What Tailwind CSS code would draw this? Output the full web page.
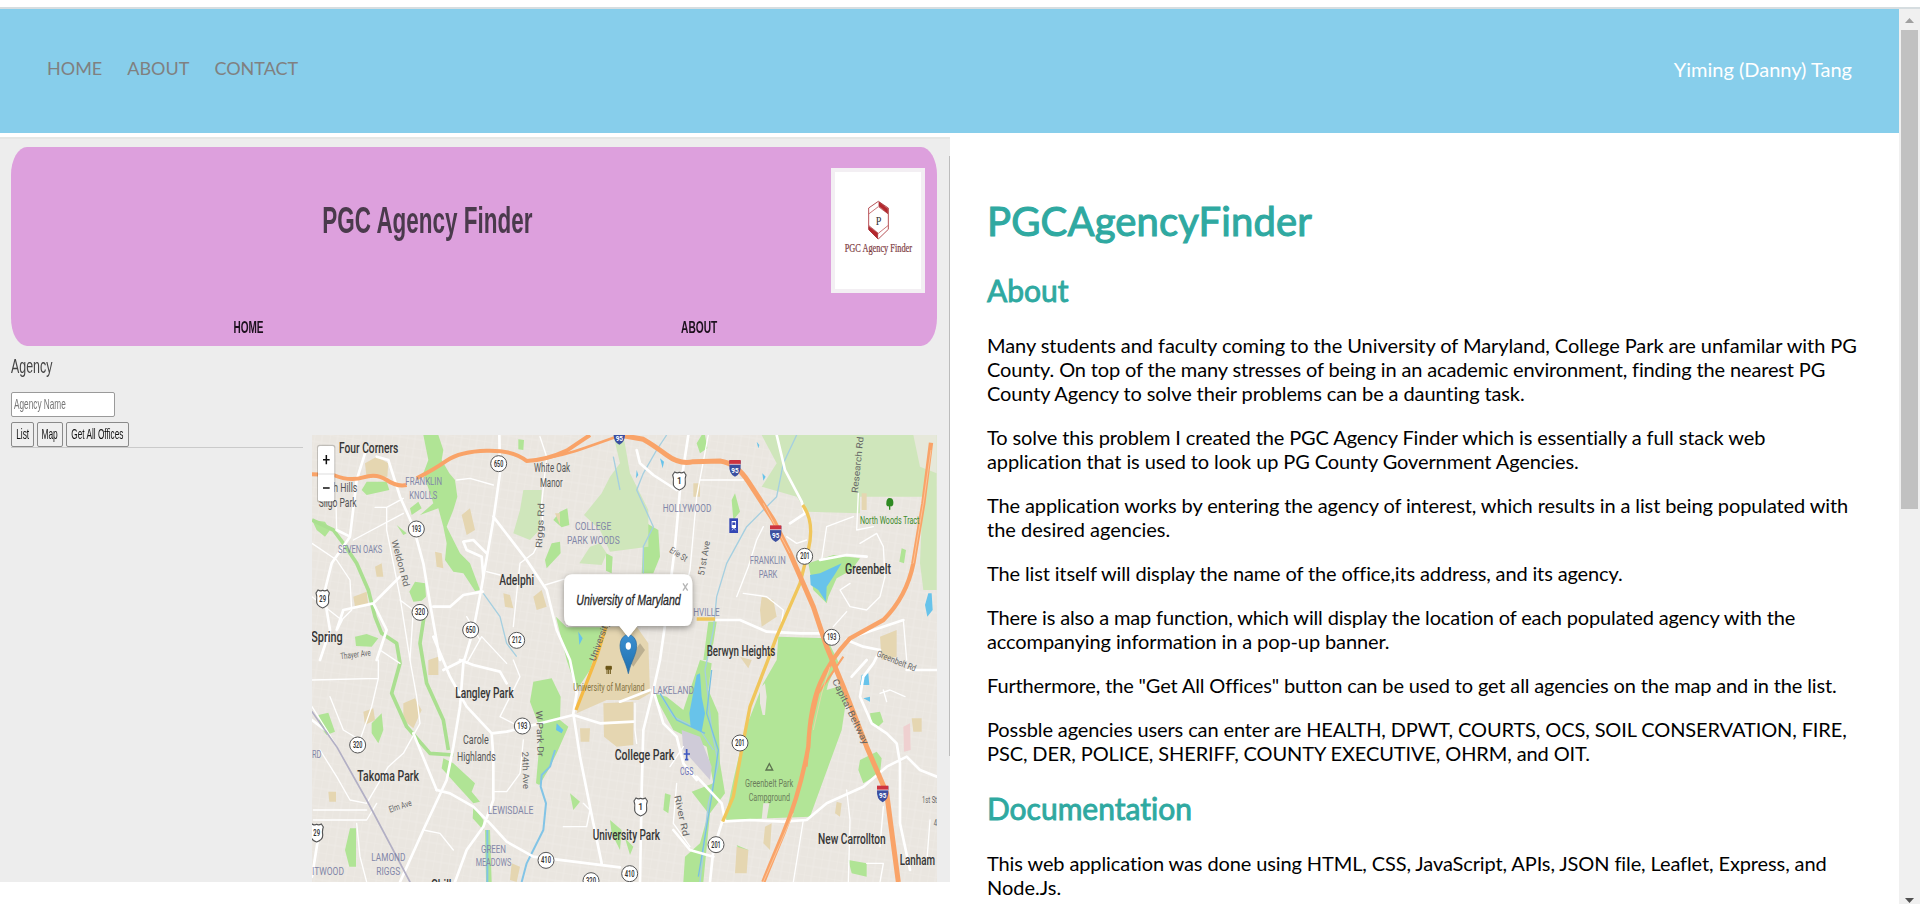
<!DOCTYPE html>
<html lang="en">
<head>
<meta charset="utf-8">
<title>PGCAgencyFinder</title>
<script src="https://cdn.jsdelivr.net/npm/@tailwindcss/browser@4"></script>
</head>
<body class="h-[904px] overflow-hidden bg-white font-['Lato',sans-serif] text-black flex flex-col">
<div class="h-[7px] shrink-0 bg-white"></div>
<div class="h-[2px] shrink-0 bg-[#d6dde0]"></div>
<div class="flex h-[895px]">
<div class="w-[1899px] flex flex-col overflow-hidden">
  <header class="h-[124px] shrink-0 bg-[#87ceeb] flex items-start justify-between pl-[47px] pr-[47px]">
    <nav class="flex gap-[25px] pt-[47px] text-[18px] leading-[24px] text-[#808080]">
      <a>HOME</a><a>ABOUT</a><a>CONTACT</a>
    </nav>
    <div class="pt-[48px] text-[20px] leading-[24px] text-white">Yiming (Danny) Tang</div>
  </header>

  <main class="flex flex-1 min-h-0">
    <section class="mt-[4px] w-[950px] h-[745px] shrink-0 bg-[#ededed] font-['Liberation_Sans',sans-serif] flex flex-col">
      <div class="h-[2px] bg-[#e5e7e5]"></div>
      <div class="flex h-[743px]">
      <div class="w-[949px] pl-[11px] pt-[8px]">
        <div class="w-[926px] h-[199px] rounded-[16px/28px] bg-[#dda0dd] flex flex-col px-3">
          <div class="flex pt-[21px]">
            <div class="flex-1 flex justify-center pt-[33px]"><span class="text-[36px] leading-[40px] font-bold text-[#4a3a4c] whitespace-nowrap scale-x-[0.624]">PGC Agency Finder</span></div>
            <div class="w-[94px] h-[125px] bg-white border-[4px] border-[#f3eff3] flex flex-col items-center">
              <svg width="86" height="117" viewBox="0 0 258 351">
                <g fill="none" stroke="#a82f35" stroke-width="2.5">
                  <path d="M130 88 160 108V172L130 201 101 172V108Z"/>
                  <path d="M101 126 130 104 160 126M101 160 130 184 160 160" stroke="#c05a5e"/>
                  <path d="M132 90 158 110V124L132 102ZM102 164 128 184V200L102 174Z" fill="#b5262c"/>
                </g>
                <text x="122" y="158" font-family="Liberation Serif" font-size="40" textLength="17" lengthAdjust="spacingAndGlyphs" fill="#333">P</text>
                <text x="29" y="241" font-family="Liberation Serif" font-size="40" textLength="202" lengthAdjust="spacingAndGlyphs" fill="#7d3a40" stroke="#7d3a40" stroke-width=".7">PGC Agency Finder</text>
              </svg>
            </div>
          </div>
          <div class="grid grid-cols-2 pt-[25px] text-[17px] leading-[20px] font-bold text-[#1c101d]">
            <div class="flex justify-center"><span class="scale-x-[0.59]">HOME</span></div>
            <div class="flex justify-center"><span class="scale-x-[0.6]">ABOUT</span></div>
          </div>
        </div>
        <div class="flex w-[926px] h-[536px]">
          <div class="w-[300px] shrink-0">
            <div class="pt-[9px] text-[20px] leading-[22px] text-[#444]"><span class="inline-block origin-left scale-x-[0.62]">Agency</span></div>
            <div class="mt-[15px] w-[104px] h-[25px] rounded-[2px] border border-[#9a9a9a] bg-white flex items-center pl-[2px] text-[15px] text-[#757575]"><span class="origin-left scale-x-[0.55] whitespace-nowrap">Agency Name</span></div>
            <div class="mt-[5px] flex gap-[3px] text-[15px] text-[#111]">
              <div class="w-[23px] h-[25px] rounded-[2px] border border-[#8a8a8a] bg-[#efefef] flex items-center justify-center"><span class="scale-x-[0.56] shrink-0">List</span></div>
              <div class="w-[26px] h-[25px] rounded-[2px] border border-[#8a8a8a] bg-[#efefef] flex items-center justify-center"><span class="scale-x-[0.56] shrink-0">Map</span></div>
              <div class="w-[63px] h-[25px] rounded-[2px] border border-[#8a8a8a] bg-[#efefef] flex items-center justify-center"><span class="scale-x-[0.55] shrink-0 whitespace-nowrap">Get All Offices</span></div>
            </div>
            <div class="h-px w-[292px] bg-[#cacaca]"></div>
          </div>
          <div class="pt-[89px] pl-px">
<svg class="block" width="625" height="447" viewBox="36 15 1875 1341" font-family="Roboto, sans-serif">
<defs>
  <linearGradient id="pin" x2="0" y2="1"><stop stop-color="#3b8fd0"/><stop offset="1" stop-color="#1f6fae"/></linearGradient>
  <filter id="sh" x="-20%" y="-20%" width="140%" height="150%"><feDropShadow dx="0" dy="6" stdDeviation="10" flood-opacity=".4"/></filter>
  <pattern id="streets" width="46" height="54" patternUnits="userSpaceOnUse" patternTransform="rotate(9)"><path d="M0 0H46M0 27H46M0 0V54M23 0V54" stroke="#f6f4f0" stroke-width="2.4" fill="none"/></pattern>
  <g id="shield"><path d="M-17-22H17V-10Q19 18 0 26Q-19 18-17-10Z" fill="#3b4fa0"/><path d="M-17-24H17V-11H-17Z" fill="#cc3340"/><path d="M-17-11H17" stroke="#fff" stroke-width="2"/><text y="14" font-size="24" font-weight="700" text-anchor="middle" textLength="22" lengthAdjust="spacingAndGlyphs" fill="#fff">95</text></g>
  <path id="us" d="M-14-27Q-6-22 0-26Q6-22 14-27L20-18Q16-8 18 4Q20 20 0 27Q-20 20-18 4Q-16-8-20-18Z" fill="#fff" stroke="#555" stroke-width="3.5"/>
</defs>
<rect x="36" y="15" width="1875" height="1341" fill="#eae6e0"/>
<rect x="36" y="15" width="1875" height="1341" fill="url(#streets)" opacity=".4"/>

<!-- parks and fields -->
<g fill="#b0e495">
  <path d="M370 15H415L430 60 425 90 448 130 465 150 472 200 460 240 440 290 480 370 510 400 540 480 525 483 490 430 460 425 435 390 440 340 430 290 415 235 360 255 400 220 370 130 385 90Z"/>
  <path d="M655 28 672 30 670 60 655 58ZM780 245 802 235 808 285 785 292 760 270ZM755 340 780 335 782 370 740 415 735 390ZM918 370 938 380 935 430 918 422ZM185 180 200 155 260 155 268 180 200 195ZM345 455 375 460 378 500 365 512 340 515 328 485ZM165 620 200 612 235 625 215 650 168 648ZM330 235 355 215 365 235 335 255ZM290 285 320 310 310 315ZM36 270 75 275 90 300 75 320 50 300Z"/>
  <path d="M768 560 800 592 915 592 870 720 830 780 800 690ZM55 855 85 848 105 905 80 915 60 890ZM215 880 245 850 250 900 235 940 215 910ZM700 755 755 745 782 800 780 870 805 890 770 970 745 1020 718 1065 708 1060 722 900 690 815ZM430 985 460 1000 525 1060 515 1085 540 1115 520 1120 470 1065 425 1015ZM520 1130 550 1170 550 1200 518 1165ZM150 1195H168V1310H148L135 1260ZM555 1200H570L575 1356H558ZM810 1090 840 1115 820 1140ZM930 1170 965 1200 960 1260 935 1210Z"/>
  <path d="M1205 15H1215L1222 55 1200 70 1190 40ZM1305 190 1320 245 1300 270 1295 210ZM1040 280 1075 300 1080 380 1060 430 1025 430 1030 340ZM1225 575H1250L1240 640 1220 690 1210 690ZM1525 400 1600 375 1680 385 1655 420 1610 445 1585 500 1580 520 1540 480ZM1805 355 1818 360 1812 400 1798 395ZM1395 530 1410 545 1400 570 1385 560Z"/>
  <path d="M1200 690 1235 700 1225 780 1255 850 1260 1000 1275 1090 1230 1150 1210 1356H1150L1155 1280 1200 1240 1225 1150 1175 1085 1240 1060 1220 950 1120 900 1060 790 1100 800 1150 840ZM1680 990 1730 965 1745 985 1740 1030 1690 1060 1675 1020ZM1710 850 1740 845 1750 875 1730 895 1715 880ZM1095 1090 1112 1095 1105 1150 1090 1140ZM1645 1290 1700 1300 1700 1340 1655 1330ZM1310 1245 1345 1260 1330 1290ZM975 1225 1000 1250 990 1275Z"/>
</g>
<path d="M1435 620 1580 625 1615 695 1585 760 1580 780 1620 768 1640 800 1625 900 1530 1160 1275 1170 1300 1050 1335 900 1390 760 1430 690Z" fill="#b2e597"/>
<g fill="#cfe6bb">
  <path d="M960 100 930 140 905 190 852 255 900 300 930 365 1045 350V240L990 130 970 15H940ZM670 180 725 180 718 300 690 330 640 310 660 240ZM870 350 900 340 920 370 905 405 838 400Z"/>
  <path d="M1385 15H1910V480H1870L1860 400 1868 200H1680V250L1520 245 1490 200 1385 170 1430 100Z"/>
  <path d="M1840 15H1910V130L1860 110Z" fill="#e6e8da"/>
</g>
<g fill="#e5d6b1">
  <path d="M195 100 230 80 265 100 262 140 200 145ZM485 255 510 235 525 300 500 315ZM225 410 245 400 250 440 230 440ZM405 365 425 370 430 415 410 410ZM160 500 200 485 205 525 165 530ZM700 500 725 480 740 530 710 540ZM610 490 630 495 640 535 615 530ZM765 250 780 250 780 285ZM310 820 345 805 365 840 340 895 310 870ZM190 845 220 835 225 870 195 885ZM85 1085H108V1115H88ZM385 690 415 680 415 735 385 735ZM840 895H870L868 935H842Z"/>
  <path d="M910 590H1010L1045 640 1050 790 1015 810H920L830 850 870 720ZM910 820 1000 815 1000 945 950 950 912 920ZM1180 160H1200V200H1180ZM1385 500 1420 510 1430 560 1385 590 1380 540ZM1685 190H1700V240H1685ZM1740 620 1790 600 1790 680 1745 690ZM1320 680 1355 690 1345 715ZM1395 1190 1415 1180 1410 1260 1390 1240ZM1610 1115 1625 1120 1620 1160 1605 1150ZM1835 865H1865V905H1840ZM635 1300 660 1310 650 1356 630 1350ZM1310 1250 1345 1260 1340 1330 1305 1330Z"/>
</g>
<path d="M1380 775 1395 760 1400 800 1395 855 1388 855 1380 820Z" fill="#eae6e0"/>
<path d="M1390 1120H1408L1400 1168H1385Z" fill="#eae6e0"/>
<path d="M1145 900 1200 920 1235 1010 1230 1050 1150 960Z" fill="#cfcbd8"/>
<path d="M1810 890 1830 880 1832 960 1812 965Z" fill="#efd0d0"/>
<g fill="none" stroke="#aadf90" stroke-width="11" stroke-linejoin="round">
  <path d="M36 270 100 300 130 340 170 400 205 480 225 560 245 610 290 640 300 700 275 790 320 890 390 970 460 975M372 560 360 640 380 760 430 870 445 960"/>
</g>
<g fill="none" stroke="#82c4e6" stroke-width="4" stroke-linejoin="round">
  <path d="M1100 15 1070 60 1030 130 1010 180 1060 290 1030 350 1030 430M1490 15 1450 100 1430 200 1340 290 1280 400 1250 500 1240 600 1215 720 1235 900 1255 1000 1225 1120 1200 1356M1080 790 1120 860 1200 900 1240 960M550 490 600 560 620 640 650 680M940 80 960 180" stroke="#a5cfe0"/>
  <path d="M1235 720 1220 850 1255 960 1235 1100 1195 1340M1080 790 1130 870 1215 910" stroke="#79bfe2"/>
  <path d="M765 960 750 1010 725 1035 722 1070 738 1120 730 1200 700 1260 680 1300 665 1356M562 1200V1356" stroke-width="6"/>
</g>
<g fill="#68c3ea">
  <path d="M1190 735 1200 730 1205 800 1215 850 1205 905 1172 890 1168 850ZM1530 435 1560 430 1625 400 1600 440 1580 470 1578 515 1555 480 1532 465ZM1885 490 1895 490 1898 540 1882 560 1875 525ZM1685 735 1705 730 1708 765 1680 765ZM770 880 790 900 785 910 768 900ZM835 605 848 625 838 645ZM1690 805 1710 800 1710 815ZM1080 85 1092 95 1088 115ZM1010 120 1015 135 1008 145ZM1370 35 1378 45 1375 55ZM1387 130 1397 140 1390 152Z"/>
</g>

<!-- minor and main roads -->
<g fill="none" stroke="#fff" stroke-linejoin="round" stroke-linecap="round">
  <g stroke-width="4">
    <path d="M110 300 108 220M225 232H260L310 205M260 232V300L300 500 330 690M160 330 310 250M36 340 110 390 150 450 155 540 125 570M125 570 36 500M470 150 510 145 580 165M560 425 600 435M640 590 650 490 660 400 700 370 730 310 725 220 740 80 720 20M735 465 800 445M500 700 545 620 620 700M540 630 500 560M300 510 340 540 330 690"/>
    <path d="M36 750 235 745M90 800 130 900 180 930M235 690V745L215 830 180 930M40 1140H200M40 1170H200L230 1120M330 690 350 800 360 880 310 970 265 1010 200 1120 150 1110 110 1040 60 960M370 1200 420 1210 460 1260M300 700 240 660M580 1085H620L660 1030 670 930M850 1120 870 1140 860 1190H790M640 690 660 740 600 860 640 880M1005 820V900L1010 940M170 1180 180 1280 200 1356M36 830 80 900 110 950"/>
    <path d="M1225 15 1190 200 1170 420 1150 500 1110 580M1200 150H1330M1310 500 1345 410 1370 330 1390 290M1330 490 1400 500 1450 540 1440 610M1460 320 1490 340 1520 330M1565 390 1580 290 1660 260M1675 190 1670 300 1720 290M1680 340 1730 310 1750 350 1755 440 1740 500 1700 540M1700 540 1650 530 1620 480 1650 460M1640 545 1600 590M1810 570 1820 690M1815 800 1770 780 1740 790M1760 815 1750 780M1150 950 1110 1010M1130 1060 1120 1180 1170 1250M1640 1080 1650 1170 1645 1356M1750 1130 1740 1250M1510 1170 1480 1356M1890 1170 1880 1300M1700 1300 1750 1300 1740 1356"/>
  </g>
  <g stroke-width="8">
    <path d="M195 70 170 150 150 320 95 400 75 480M230 80 265 90 300 200 340 290 370 400 390 520 420 690M150 320 110 300M598 15 600 130 580 270 545 470 520 600 490 700 480 830 460 950 440 1050 370 1200 300 1356M580 260 680 390 740 480 770 600 810 690 830 790 820 850 840 980 880 1180 905 1300M548 485 490 495 450 530H400M550 440 545 380 500 360 490 335 520 330 560 370M400 620 450 740 500 830 575 910 580 980 580 1110 550 1190 500 1260 465 1356M575 910 620 905 820 855 900 880 1000 875M410 1080 450 1090 520 1130 570 1180 620 1235 700 1280 960 1312"/>
    <path d="M75 510 90 600 60 690M125 570 110 600 130 540 220 520 260 480 300 440M220 520 260 600 230 690M36 870 75 900M480 690 520 705 600 725 620 760M340 910 410 1080M36 1190H60L36 1340M490 690 430 720"/>
    <path d="M1165 15 1140 180 1125 350 1100 550 1080 690 1060 780 1030 900 1025 1080 1020 1356M1010 60 1020 100 1060 135 1130 180M1430 15 1455 120 1505 215 1515 250 1470 280M1250 570 1320 570 1400 605 1500 610 1580 610M1640 630 1690 650 1740 660M1660 620 1810 570M1560 390 1640 375 1700 380M1740 660 1720 700 1690 740 1680 800 1715 880 1760 910 1790 940 1800 1000 1800 1180 1830 1320M1820 720H1911M1265 1175 1350 1170 1450 1175 1520 1170 1580 1120 1690 1070 1760 1010 1820 980 1860 1020 1911 1040M1190 1040 1265 1120 1275 1170M1060 780 1090 880 1130 920 1150 1000 1190 1050M1265 1180 1240 1260 1230 1356M1120 1200 1170 1260 1240 1280M960 815 1050 780M1655 740 1700 690"/>
  </g>
  <path d="M36 845 110 950 200 1110 330 1356" stroke="#b2afc4" stroke-width="5"/>
</g>
<g fill="none" stroke="#f0c65b" stroke-width="10" stroke-linejoin="round">
  <path d="M1508 225Q1545 275 1525 360L1500 460 1430 620 1400 700 1350 830 1325 960 1300 1100 1268 1175M1190 567H1245"/>
  <path d="M918 590 890 680 828 840" stroke="#f5ba45"/>
</g>
<g fill="none" stroke="#f9a368" stroke-width="14" stroke-linejoin="round" stroke-linecap="butt">
  <path d="M36 133 100 135Q150 155 190 142T260 150T320 165M350 145Q400 120 440 92T560 62T680 93Q740 90 800 62L870 15" stroke-width="12"/>
  <path d="M700 92Q800 75 860 52L945 22" stroke-width="8"/>
  <path d="M975 18 1030 28Q1060 45 1100 75T1180 95L1260 93Q1310 100 1345 155L1420 270 1470 370 1540 530 1580 650 1630 770 1700 950 1760 1090 1795 1356" stroke-width="15"/>
  <path d="M1893 38 1870 220 1840 400Q1820 500 1750 570L1650 625Q1590 690 1560 760T1525 950Q1500 1090 1450 1210T1390 1356" stroke-width="13"/>
  <path d="M1630 680 1555 790 1530 900 1520 1010" stroke-width="6"/>
</g>
<path d="M1893 60 1870 220 1840 400M1590 710 1565 790 1540 900M1480 1150 1390 1356M1390 220 1470 370" stroke="#fcd4b0" stroke-width="2" fill="none"/>

<!-- route shields -->
<g fill="#fff" stroke="#555" stroke-width="3">
  <circle cx="596" cy="101" r="24"/><circle cx="349" cy="297" r="24"/><circle cx="360" cy="547" r="24"/><circle cx="512" cy="600" r="24"/><circle cx="650" cy="631" r="24"/><circle cx="1514" cy="379" r="24"/><circle cx="1595" cy="622" r="24"/><circle cx="173" cy="945" r="24"/><circle cx="667" cy="888" r="24"/><circle cx="738" cy="1291" r="24"/><circle cx="873" cy="1352" r="24"/><circle cx="989" cy="1331" r="24"/><circle cx="1320" cy="939" r="24"/><circle cx="1248" cy="1244" r="24"/>
</g>
<g font-size="25" font-weight="600" fill="#333" text-anchor="middle">
  <text x="596" y="110" textLength="28" lengthAdjust="spacingAndGlyphs">650</text><text x="349" y="306" textLength="28" lengthAdjust="spacingAndGlyphs">193</text><text x="360" y="556" textLength="30" lengthAdjust="spacingAndGlyphs">320</text><text x="512" y="609" textLength="30" lengthAdjust="spacingAndGlyphs">650</text><text x="650" y="640" textLength="28" lengthAdjust="spacingAndGlyphs">212</text><text x="1515" y="388" textLength="28" lengthAdjust="spacingAndGlyphs">201</text><text x="1595" y="631" textLength="28" lengthAdjust="spacingAndGlyphs">193</text><text x="173" y="954" textLength="28" lengthAdjust="spacingAndGlyphs">320</text><text x="667" y="897" textLength="30" lengthAdjust="spacingAndGlyphs">193</text><text x="738" y="1300" textLength="30" lengthAdjust="spacingAndGlyphs">410</text><text x="873" y="1361" textLength="30" lengthAdjust="spacingAndGlyphs">320</text><text x="989" y="1340" textLength="30" lengthAdjust="spacingAndGlyphs">410</text><text x="1320" y="948" textLength="28" lengthAdjust="spacingAndGlyphs">201</text><text x="1248" y="1253" textLength="28" lengthAdjust="spacingAndGlyphs">201</text>
</g>
<use href="#us" x="68" y="507"/><use href="#us" x="1138" y="153"/><use href="#us" x="50" y="1209"/><use href="#us" x="1022" y="1131"/>
<g font-size="25" font-weight="600" fill="#333" text-anchor="middle"><text x="68" y="517" textLength="20" lengthAdjust="spacingAndGlyphs">29</text><text x="1138" y="162">1</text><text x="50" y="1218" textLength="20" lengthAdjust="spacingAndGlyphs">29</text><text x="1022" y="1140">1</text></g>
<use href="#shield" x="958" y="18"/><use href="#shield" x="1305" y="114"/><use href="#shield" x="1427" y="310"/><use href="#shield" x="1748" y="1091"/>

<!-- street names -->
<g font-size="27" fill="#666">
  <text transform="translate(726 355) rotate(-87)" textLength="135" lengthAdjust="spacingAndGlyphs">Riggs Rd</text>
  <text transform="translate(274 332) rotate(75)" textLength="145" lengthAdjust="spacingAndGlyphs">Weldon Rd</text>
  <text transform="translate(122 688) rotate(-7)" textLength="92" lengthAdjust="spacingAndGlyphs">Thayer Ave</text>
  <text transform="translate(885 695) rotate(-70)" textLength="125" lengthAdjust="spacingAndGlyphs">University</text>
  <text transform="translate(1106 365) rotate(32)" textLength="58" lengthAdjust="spacingAndGlyphs">Erie St</text>
  <text transform="translate(1212 438) rotate(-80)" textLength="105" lengthAdjust="spacingAndGlyphs">51st Ave</text>
  <text transform="translate(1673 190) rotate(-84)" textLength="170" lengthAdjust="spacingAndGlyphs">Research Rd</text>
  <text transform="translate(1728 678) rotate(22)" textLength="125" lengthAdjust="spacingAndGlyphs">Greenbelt Rd</text>
  <text transform="translate(1596 752) rotate(64)" textLength="215" lengthAdjust="spacingAndGlyphs">Capital Beltway</text>
  <text transform="translate(708 842) rotate(88)" textLength="138" lengthAdjust="spacingAndGlyphs">W Park Dr</text>
  <text transform="translate(666 965) rotate(88)" textLength="112" lengthAdjust="spacingAndGlyphs">24th Ave</text>
  <text transform="translate(270 1148) rotate(-18)" textLength="70" lengthAdjust="spacingAndGlyphs">Elm Ave</text>
  <text transform="translate(1123 1098) rotate(78)" textLength="125" lengthAdjust="spacingAndGlyphs">River Rd</text>
  <text x="1866" y="1120" textLength="45" lengthAdjust="spacingAndGlyphs">1st St</text>
  <text x="1901" y="1189" textLength="10" lengthAdjust="spacingAndGlyphs">4</text>
</g>

<!-- neighbourhoods -->
<g font-size="35" fill="#8286a8">
  <text x="316" y="165" textLength="110" lengthAdjust="spacingAndGlyphs">FRANKLIN</text><text x="328" y="208" textLength="84" lengthAdjust="spacingAndGlyphs">KNOLLS</text>
  <text x="114" y="369" textLength="133" lengthAdjust="spacingAndGlyphs">SEVEN OAKS</text>
  <text x="825" y="300" textLength="109" lengthAdjust="spacingAndGlyphs">COLLEGE</text><text x="801" y="341" textLength="158" lengthAdjust="spacingAndGlyphs">PARK WOODS</text>
  <text x="1088" y="246" textLength="146" lengthAdjust="spacingAndGlyphs">HOLLYWOOD</text>
  <text x="1349" y="403" textLength="108" lengthAdjust="spacingAndGlyphs">FRANKLIN</text><text x="1376" y="445" textLength="56" lengthAdjust="spacingAndGlyphs">PARK</text>
  <text x="1180" y="558" textLength="79" lengthAdjust="spacingAndGlyphs">HVILLE</text>
  <text x="1058" y="791" textLength="124" lengthAdjust="spacingAndGlyphs">LAKELAND</text>
  <text x="1140" y="1036" textLength="40" lengthAdjust="spacingAndGlyphs" fill="#6a72b8">CGS</text>
  <text x="36" y="983" textLength="28" lengthAdjust="spacingAndGlyphs">RD</text>
  <text x="563" y="1153" textLength="137" lengthAdjust="spacingAndGlyphs">LEWISDALE</text>
  <text x="543" y="1268" textLength="75" lengthAdjust="spacingAndGlyphs">GREEN</text><text x="527" y="1309" textLength="107" lengthAdjust="spacingAndGlyphs">MEADOWS</text>
  <text x="214" y="1294" textLength="102" lengthAdjust="spacingAndGlyphs">LAMOND</text><text x="229" y="1336" textLength="72" lengthAdjust="spacingAndGlyphs">RIGGS</text>
  <text x="36" y="1334" textLength="96" lengthAdjust="spacingAndGlyphs">ITWOOD</text>
</g>
<g font-size="38" fill="#555">
  <text x="100" y="185" textLength="72" lengthAdjust="spacingAndGlyphs">h Hills</text><text x="56" y="232" textLength="114" lengthAdjust="spacingAndGlyphs">Sligo Park</text>
  <text x="702" y="126" textLength="108" lengthAdjust="spacingAndGlyphs">White Oak</text><text x="720" y="172" textLength="68" lengthAdjust="spacingAndGlyphs">Manor</text>
  <text x="489" y="943" textLength="77" lengthAdjust="spacingAndGlyphs">Carole</text><text x="471" y="992" textLength="116" lengthAdjust="spacingAndGlyphs">Highlands</text>
</g>
<g font-size="34" fill="#6b7d5b">
  <text x="1335" y="1070" textLength="145" lengthAdjust="spacingAndGlyphs">Greenbelt Park</text><text x="1346" y="1114" textLength="124" lengthAdjust="spacingAndGlyphs">Campground</text>
  <text x="1680" y="281" textLength="178" lengthAdjust="spacingAndGlyphs" fill="#3c8a2b">North Woods Tract</text>
  <text x="820" y="782" textLength="214" lengthAdjust="spacingAndGlyphs" fill="#857444">University of Maryland</text>
</g>
<g font-size="45" font-weight="500" fill="#363636">
  <text x="117" y="68" textLength="178" lengthAdjust="spacingAndGlyphs">Four Corners</text>
  <text x="598" y="466" textLength="104" lengthAdjust="spacingAndGlyphs">Adelphi</text>
  <text x="34" y="636" textLength="94" lengthAdjust="spacingAndGlyphs">Spring</text>
  <text x="1635" y="431" textLength="138" lengthAdjust="spacingAndGlyphs">Greenbelt</text>
  <text x="1220" y="678" textLength="206" lengthAdjust="spacingAndGlyphs">Berwyn Heights</text>
  <text x="466" y="805" textLength="175" lengthAdjust="spacingAndGlyphs">Langley Park</text>
  <text x="172" y="1053" textLength="185" lengthAdjust="spacingAndGlyphs">Takoma Park</text>
  <text x="944" y="990" textLength="179" lengthAdjust="spacingAndGlyphs">College Park</text>
  <text x="878" y="1229" textLength="202" lengthAdjust="spacingAndGlyphs">University Park</text>
  <text x="1554" y="1242" textLength="203" lengthAdjust="spacingAndGlyphs">New Carrollton</text>
  <text x="1799" y="1306" textLength="106" lengthAdjust="spacingAndGlyphs">Lanham</text>
  <text x="393" y="1380" textLength="106" lengthAdjust="spacingAndGlyphs">Chillum</text>
</g>

<!-- point symbols -->
<path d="M1769 204C1782 204 1781 220 1779 226 1774 231 1772 229 1771 229V239H1767V229C1760 231 1758 224 1759 219 1759 210 1762 204 1769 204Z" fill="#2f8a22"/>
<g transform="translate(1288 265)"><rect width="26" height="44" fill="#3346b5"/><rect x="7" y="8" width="13" height="21" fill="#fff"/><rect x="9" y="12" width="9" height="8" fill="#3346b5"/><path d="M8 36 13 29M19 36 14 29" stroke="#fff" stroke-width="2"/></g>
<path d="M1160 957V990M1151 972H1170M1155 989H1165" stroke="#3f58c0" stroke-width="5"/>
<path d="M1398 1020 1408 1001 1418 1020Z" fill="none" stroke="#5e7350" stroke-width="4"/>
<path d="M918 709H934V718H918ZM921 720V732M926 720V732M931 720V732" fill="#6a5516" stroke="#6a5516" stroke-width="3"/>

<!-- marker and popup -->
<path d="M985 690 1020 640 1035 660 1000 710Z" fill="#000" opacity=".18"/>
<g filter="url(#sh)"><path d="M816 433H1153Q1177 433 1177 463V558Q1177 588 1153 588H1010L985 622 960 588H816Q792 588 792 558V463Q792 433 816 433Z" fill="#fff"/></g>
<path d="M985 731C976 690 960 675 960 646A25 32 0 0 1 1010 646C1010 675 994 690 985 731Z" fill="url(#pin)" stroke="#2468a0" stroke-width="2"/><ellipse cx="985" cy="648" rx="8" ry="11" fill="#fff"/>
<path d="M955 585H1015L985 622Z" fill="#fff"/>
<text x="829" y="524" font-family="Liberation Sans" font-style="italic" font-size="43" textLength="313" lengthAdjust="spacingAndGlyphs" fill="#2b2b2b" stroke="#2b2b2b" stroke-width="1">University of Maryland</text>
<path d="M1149 460 1163 482M1163 460 1149 482" stroke="#b5b5b5" stroke-width="4"/>

<!-- zoom buttons -->
<rect x="51" y="44" width="55" height="174" rx="8" fill="#000" opacity=".18"/>
<rect x="54" y="48" width="49" height="166" rx="6" fill="#fff"/><path d="M54 132H103" stroke="#ccc" stroke-width="2"/>
<path d="M69 89H89M79 75V103M69 174H89" stroke="#111" stroke-width="4.5"/>
</svg>
          </div>
        </div>
      </div>
      <div class="w-px mt-[17px] h-[600px] bg-[#bcbcbc]"></div>
      </div>
    </section>

    <article class="pl-[37px] w-[920px] text-[20px] leading-[24px] tracking-[-0.11px]">
      <h1 class="pt-[64px] text-[40px] leading-[48px] tracking-[0.15px] text-[#2fa9a1] [-webkit-text-stroke:1.1px_#2fa9a1]">PGCAgencyFinder</h1>
      <h2 class="mt-[27px] text-[30px] leading-[36px] tracking-normal text-[#2fa9a1] [-webkit-text-stroke:0.9px_#2fa9a1]">About</h2>
      <div class="mt-[25px] flex flex-col gap-5 whitespace-nowrap">
        <p><span class="tracking-[-0.065px]">Many students and faculty coming to the University of Maryland, College Park are unfamilar with PG</span><br><span class="tracking-[-0.145px]">County. On top of the many stresses of being in an academic environment, finding the nearest PG</span><br>County Agency to solve their problems can be a daunting task.</p>
        <p>To solve this problem I created the PGC Agency Finder which is essentially a full stack web<br>application that is used to look up PG County Government Agencies.</p>
        <p>The application works by entering the agency of interest, which results in a list being populated with<br><span class="tracking-normal">the desired agencies.</span></p>
        <p class="tracking-[-0.138px]">The list itself will display the name of the office,its address, and its agency.</p>
        <p><span class="tracking-[-0.15px]">There is also a map function, which will display the location of each populated agency with the</span><br>accompanying information in a pop-up banner.</p>
        <p class="tracking-[-0.145px]">Furthermore, the "Get All Offices" button can be used to get all agencies on the map and in the list.</p>
        <p>Possble agencies users can enter are HEALTH, DPWT, COURTS, OCS, SOIL CONSERVATION, FIRE,<br>PSC, DER, POLICE, SHERIFF, COUNTY EXECUTIVE, OHRM, and OIT.</p>
      </div>
      <h2 class="mt-[25px] text-[30px] leading-[36px] tracking-normal [font-variant-ligatures:none] text-[#2fa9a1] [-webkit-text-stroke:0.9px_#2fa9a1]">Documentation</h2>
      <p class="mt-[25px] whitespace-nowrap">This web application was done using HTML, CSS, JavaScript, APIs, JSON file, Leaflet, Express, and<br><span class="tracking-normal">Node.Js.</span></p>
    </article>
  </main>
</div>
<aside class="w-[21px] bg-[#f0f0f0] flex flex-col items-center pr-px">
  <svg width="17" height="21" viewBox="0 0 17 21"><path d="M4 14 8.5 9 13 14Z" fill="#a0a0a0"/></svg>
  <div class="w-[17px] h-[479px] bg-[#c1c1c1]"></div>
  <svg class="mt-auto" width="17" height="12" viewBox="0 0 17 12"><path d="M4 6 8.5 11 13 6Z" fill="#505050"/></svg>
</aside>
</div>
</body>
</html>
